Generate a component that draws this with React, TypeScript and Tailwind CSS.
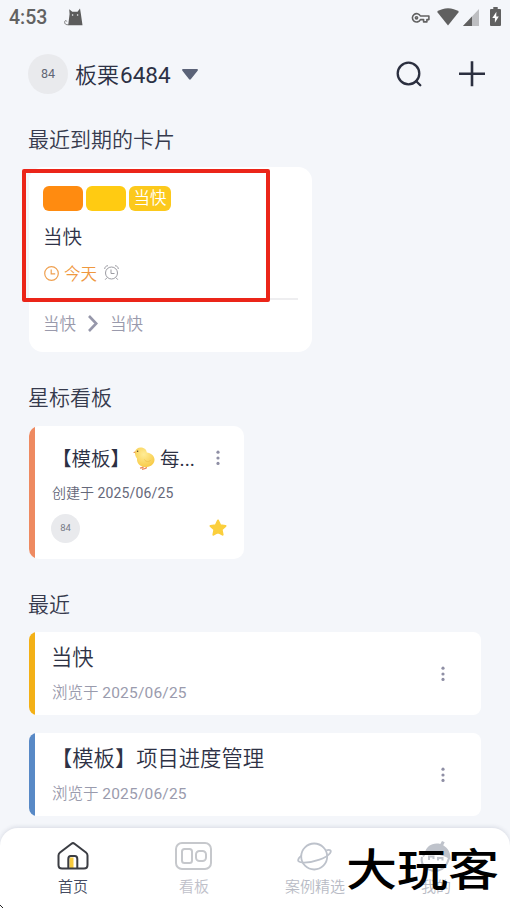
import React from 'react';

interface MoreDotsProps {
  className?: string;
}

const MoreDots: React.FC<MoreDotsProps> = ({ className = '' }) => (
  <svg className={`h-4 w-1 shrink-0 ${className}`} viewBox="0 0 4 16" fill="#8f8fa5">
    <circle cx="2" cy="2.2" r="1.6" />
    <circle cx="2" cy="8" r="1.6" />
    <circle cx="2" cy="13.4" r="1.6" />
  </svg>
);

const StatusBar = () => (
  <div className="flex h-9 items-center justify-between pb-px pl-[9px] pr-[9px] text-[#626262]">
    <div className="flex items-center">
      <span className="w-[55px] text-[19.5px] font-medium leading-none">4:53</span>
      <svg className="-mt-0.5 h-[18px] w-[19px]" viewBox="0 0 19 18">
        <path d="M4.200 17.200 5.600 6 5.200 1.200 8.300 3.800h5.200L16 .6l.9 5.400 1.600 11.200z" fill="#5c5c5c" />
        <path d="M5 16.600C1.500 17.200.4 15.500.7 13.700c.3-1.400 2-1.400 2-.2" fill="none" stroke="#777" strokeWidth="1" />
        <circle cx="8.600" cy="7" r=".8" fill="#f4f6fa" />
        <circle cx="13.600" cy="7" r=".8" fill="#f4f6fa" />
      </svg>
    </div>
    <div className="flex items-center">
      <svg className="mr-[7px] h-3 w-[19px]" viewBox="0 0 19 12" fill="none" stroke="#626262" strokeWidth="1.600">
        <path d="M9.400 4A4.200 4.200 0 1 0 9.400 7.600h3.200v2.300h3.300V7.600h2V4z" strokeLinejoin="round" />
        <circle cx="5.500" cy="5.800" r="1.100" />
      </svg>
      <svg className="-mt-px mr-1 h-[18px] w-[22px]" viewBox="0 0 22 18" fill="#606060">
        <path d="M0 3.800C6.200-1 15.800-1 22 3.800L11 17.500z" />
      </svg>
      <svg className="-mt-px mr-[11px] h-[17px] w-4" viewBox="0 0 16 17">
        <path d="M16 0v17H0z" fill="#bdbec1" />
        <path d="M9 7.400V17H0z" fill="#606060" />
      </svg>
      <svg className="-mt-0.5 h-[19px] w-[11px]" viewBox="0 0 11 19">
        <path d="M3.300 0h4.400v2H10q1 0 1 1v15q0 1-1 1H1q-1 0-1-1V3q0-1 1-1h2.300z" fill="#606060" />
        <path d="M6.400 4.800 2.300 11h2.600v4.800L8.800 9.500H6.200z" fill="#fff" />
      </svg>
    </div>
  </div>
);

const Header = () => (
  <header className="flex h-[76px] items-center justify-between pl-7 pr-[25px]">
    <div className="flex items-center">
      <span className="flex size-10 items-center justify-center rounded-full bg-[#e9eaed] text-[12.5px] font-normal text-[#616675]">84</span>
      <span className="ml-[7px] mt-0.5 text-[22px] leading-8 text-[#2c3145]">
        板栗<span className="ml-px text-[22.5px] font-normal">6484</span>
      </span>
      <svg className="ml-[11px] h-[11px] w-4" viewBox="0 0 16 11" fill="#5b6378">
        <path d="M1.200 0h13.600c1 0 1.500 1 .8 1.700L8.800 10.200c-.5.6-1.200.6-1.700 0L.4 1.700C-.2 1 .2 0 1.200 0z" />
      </svg>
    </div>
    <div className="flex items-center gap-[37px]">
      <svg className="h-[26px] w-[26px]" viewBox="0 0 26 26" fill="none" stroke="#2b2f3f" strokeWidth="2.300" strokeLinecap="round">
        <circle cx="12.500" cy="12.500" r="10.800" />
        <path d="m20 20 4.300 4.300" />
      </svg>
      <svg className="size-[26px]" viewBox="0 0 26 26" stroke="#2b2f3f" strokeWidth="2.600">
        <path d="M0 12.800h26M13 .300v25" />
      </svg>
    </div>
  </header>
);

const DueCard = () => (
  <div className="relative ml-[29px] mt-[11px] h-[185px] w-[283px] rounded-[14px] bg-white px-3.5 pt-[19px]">
    <div className="flex gap-[3px]">
      <span className="h-[25px] w-10 rounded-md bg-[#ff8b10]" />
      <span className="h-[25px] w-10 rounded-md bg-[#ffcb12]" />
      <span className="h-[25px] w-[42px] rounded-md bg-[#fcc91c] text-center text-[16.5px] leading-[26px] text-white">当快</span>
    </div>
    <div className="mt-3 text-[19.5px] leading-[30px] text-[#2e3247]">当快</div>
    <div className="mt-2 flex h-6 items-center text-[16.5px] text-[#ef983f]">
      <svg className="ml-px size-[15px]" viewBox="0 0 15 15" fill="none" stroke="#efa050" strokeWidth="1.200">
        <circle cx="7.500" cy="7.500" r="6.800" />
        <path d="M7.200 3.500v4.300h4" />
      </svg>
      <span className="ml-[5px] mt-1">今天</span>
      <svg className="ml-[7px] h-4 w-[15px]" viewBox="0 0 15 16" fill="none" stroke="#9b9ba2" strokeWidth="1">
        <circle cx="7.500" cy="8" r="6" />
        <path d="M7 4.500v4h3.500M.7 4C.8 2 2 .8 4 .7M11 .7c2 .1 3.200 1.300 3.300 3.300M3 12.700l-1.800 2M12 12.700l1.800 2" />
      </svg>
    </div>
    <div className="mt-[13px] h-0.5 bg-[#eeeef0]" />
    <div className="mt-[11px] flex h-6 items-center text-[16.5px] text-[#9a9aac]">
      <span className="mt-1">当快</span>
      <svg className="mx-3 h-[17px] w-[10px]" viewBox="0 0 10 17" fill="none" stroke="#9697aa" strokeWidth="2.600">
        <path d="m1 1 7.200 7.500L1 16" />
      </svg>
      <span className="mt-1">当快</span>
    </div>
    {/* Highlight frame */}
    <div className="absolute -left-[7px] top-[2px] h-[133px] w-[248px] rounded-[2px] border-4 border-[#eb2519]" />
  </div>
);

const Chick = () => (
  <svg className="ml-[3px] mr-[5px] h-[23px] w-[22px] shrink-0" viewBox="0 0 22 23">
    <defs>
      <radialGradient id="chick" cx=".45" cy=".35" r=".65">
        <stop offset="0" stopColor="#ffec96" />
        <stop offset="1" stopColor="#f8cc4a" />
      </radialGradient>
    </defs>
    <path d="m10.500 18-.5 2.500-3 .7M14 18l-1 3.300-4 1" fill="none" stroke="#ed8757" strokeWidth="1.300" />
    <path d="M2 5C2.400 1.800 5.500.2 8.600.6c3.600.5 4.900 2.700 5.200 5 4 .6 7.700 3.200 7.700 7.200-.1 4-3.400 7-7.700 7.300-5.800.4-10.300-2.900-9.800-8.600C2.800 10 1.700 7.800 2 5z" fill="url(#chick)" />
    <path d="M11.500 12.500c1.200 2.600 4.800 2.800 6.300.4" fill="none" stroke="#efc04d" strokeWidth=".8" />
    <path d="M2.300 4.200 0 5.500l2.400.8z" fill="#e79653" />
    <circle cx="4.600" cy="4.200" r=".8" fill="#55412d" />
  </svg>
);

const StarredBoard = () => (
  <div className="ml-[29px] mt-3 flex h-[133px] w-[215px] overflow-hidden rounded-[10px] bg-white">
    <div className="w-1.5 shrink-0 bg-[#ee8a61]" />
    <div className="flex-1 pl-[17px] pr-[17px] pt-4">
      <div className="flex h-8 items-center text-[19.5px] text-[#2c3043]">
        <span className="mt-[3px] whitespace-nowrap">【模板】</span>
        <Chick />
        <span className="mt-[3px] whitespace-nowrap">
          每<span className="font-normal">...</span>
        </span>
        <MoreDots className="-mt-px ml-auto mr-[7px]" />
      </div>
      <div className="mt-2 text-[14px] leading-[22px] text-[#65687a]">
        创建于 <span className="font-normal tracking-[0.15px]">2025/06/25</span>
      </div>
      <div className="mt-[10px] flex h-7 items-center justify-between">
        <span className="-ml-px flex size-[29px] items-center justify-center rounded-full bg-[#e9eaed] text-[9.500px] font-normal text-[#777b86]">84</span>
        <svg className="h-[18px] w-[18px]" viewBox="0 0 18 18" fill="#fbcf3d" stroke="#fbcf3d" strokeWidth="2" strokeLinejoin="round">
          <path d="m9 1.500 2.200 4.700 5.300.7-3.900 3.500 1 5.300L9 13.200l-4.600 2.500 1-5.300-3.900-3.500 5.300-.7z" />
        </svg>
      </div>
    </div>
  </div>
);

interface RecentBoardProps {
  title: string;
  date: string;
  stripe: string;
}

const RecentBoard: React.FC<RecentBoardProps> = ({ title, date, stripe }) => (
  <div className="ml-[29px] flex h-[83px] w-[452px] items-center overflow-hidden rounded-[8px] bg-white">
    <div className={`h-full w-1.5 shrink-0 ${stripe}`} />
    <div className="flex-1 pl-4">
      <div className="text-[21.300px] leading-8 text-[#2e3245]">{title}</div>
      <div className="mt-[7px] pl-px text-[15.500px] leading-6 text-[#9a9bad]">
        浏览于 <span className="font-normal tracking-[0.2px]">{date}</span>
      </div>
    </div>
    <MoreDots className="mr-9" />
  </div>
);

const recentBoards: RecentBoardProps[] = [
  { title: '当快', date: '2025/06/25', stripe: 'bg-[#f3b016]' },
  { title: '【模板】项目进度管理', date: '2025/06/25', stripe: 'bg-[#5889c6]' },
];

const HomeIcon = () => (
  <svg className="h-[29px] w-8" viewBox="0 0 32 29" fill="none" stroke="#3b3d43" strokeWidth="2" strokeLinejoin="round">
    <path d="M12.500 17c0-1 .5-1.500 1.500-1.500h2.500V27h-4z" fill="#f8cb3d" stroke="none" />
    <path d="M11.300 27V17c0-2 1-3 2.500-3h4c1.500 0 2.500 1 2.500 3v10" />
    <path d="M14.500 1.700c1-.8 2-.8 3 0l11.500 8.800c1 .8 1.500 1.500 1.500 3V23c0 2.500-1 3.500-3.500 3.500H5c-2.500 0-3.500-1-3.500-3.500v-9.500c0-1.500.5-2.200 1.500-3z" />
  </svg>
);

const BoardIcon = () => (
  <svg className="h-[29px] w-[37px]" viewBox="0 0 37 29" fill="none" stroke="#c6c8cc" strokeWidth="2">
    <rect x="1" y="1" width="35" height="26" rx="6" />
    <rect x="7" y="7" width="10" height="14" rx="2.500" />
    <rect x="21" y="9" width="10" height="10" rx="3.500" />
  </svg>
);

const PlanetIcon = () => (
  <svg className="h-[29px] w-9" viewBox="0 0 36 29" fill="none" stroke="#bdc2cb" strokeWidth="1.800">
    <circle cx="17.200" cy="14.500" r="13" />
    <path d="M29.300 8.300c3.700-1.300 5.600 0 3.700 2.900C29.500 16 17 20.500 7 20.700c-5.500 0-7-1.700-5-4.700.7-1 1.300-1.500 2.500-2.300" />
  </svg>
);

const AcornIcon = () => (
  <svg className="h-[31px] w-[31px]" viewBox="0 0 31 31">
    <path d="M5 12C6 5 13 1.200 20.300 3L22 0l2.700 1.200-1.500 3C28 7 31 12 30.500 19c-4-3.500-10-5.800-25.500-7z" fill="#bfc3cb" />
    <path d="M2 16c-2 9 5 13 13 14 8-.5 12-5 14-13M3 15.500l2.500-3.500M9 19v-3.500h4.500V18M18 19.500V17h4.500v2.500" fill="none" stroke="#bfc3cb" strokeWidth="2" />
  </svg>
);

const tabs = [
  { label: '首页', icon: <HomeIcon />, color: 'text-[#454a60]' },
  { label: '看板', icon: <BoardIcon />, color: 'text-[#bfc1ca]' },
  { label: '案例精选', icon: <PlanetIcon />, color: 'text-[#b8bbc5]' },
  { label: '我的', icon: <AcornIcon />, color: 'text-[#b8bbc5]' },
];

const TabBar = () => (
  <nav className="relative mt-3 h-[81px] rounded-t-[18px] bg-white pl-3 pr-[14px] pt-[13px] shadow-[0_-1px_4px_rgba(50,60,90,0.14)]">
    <div className="grid grid-cols-4">
      {tabs.map((tab) => (
        <div key={tab.label} className="flex flex-col items-center">
          <div className="flex h-[31px] items-center">{tab.icon}</div>
          <span className={`mt-[3px] pl-px text-[15px] leading-6 ${tab.color}`}>{tab.label}</span>
        </div>
      ))}
    </div>
    <div className="absolute left-[346px] top-[13px] origin-left scale-x-[1.16] whitespace-nowrap text-[44px] font-medium leading-[60px] text-black">大玩客</div>
    <svg className="absolute bottom-0 left-0 h-1 w-1" viewBox="0 0 4 4" stroke="#222">
      <path d="m0 0 4 4" />
    </svg>
  </nav>
);

const App: React.FC = () => {
  return (
    <div className="h-[908px] w-[510px] overflow-hidden bg-[#f4f6fa] font-[Roboto,'Noto_Sans_CJK_SC',sans-serif] font-[350]">
      <StatusBar />
      <Header />
      <h2 className="mt-3 pl-7 text-[21px] leading-8 text-[#363a4d]">最近到期的卡片</h2>
      <DueCard />
      <h2 className="mt-[30px] pl-7 text-[21px] leading-8 text-[#363a4d]">星标看板</h2>
      <StarredBoard />
      <h2 className="mt-[30px] pl-7 text-[21px] leading-8 text-[#363a4d]">最近</h2>
      <div className="mt-[11px] flex flex-col gap-[18px]">
        {recentBoards.map((board) => (
          <RecentBoard key={board.title} {...board} />
        ))}
      </div>
      <TabBar />
    </div>
  );
};

export default App;
